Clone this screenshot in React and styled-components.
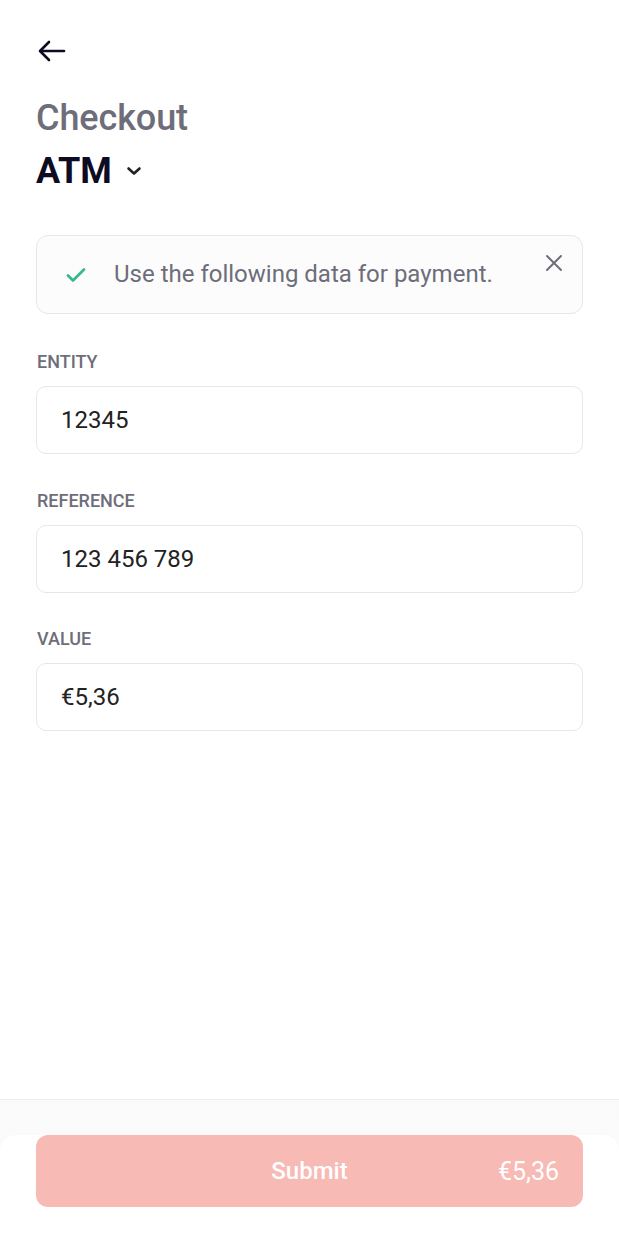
import React from "react";
import styled, { createGlobalStyle } from "styled-components";

const Global = createGlobalStyle`
  html, body { margin: 0; padding: 0; background: #ffffff; }
  body { font-family: Roboto, "Noto Sans", "Liberation Sans", sans-serif; -webkit-font-smoothing: antialiased; }
  * { box-sizing: border-box; }
`;

const Page = styled.div`
  min-height: 100vh;
  display: flex;
  flex-direction: column;
`;

const Content = styled.main`
  flex: 1;
  padding: 0 36px;
  display: flex;
  flex-direction: column;
`;

const TopBar = styled.div`
  height: 96px;
  display: flex;
  align-items: flex-start;
  padding-top: 36px;
  padding-left: 1px;
`;

const BackButton = styled.button`
  border: 0;
  background: none;
  padding: 0;
  width: 30px;
  height: 30px;
  display: flex;
  align-items: center;
  justify-content: center;
  color: #0d0c22;
`;

const Title = styled.h1`
  margin: 0;
  font-size: 36px;
  font-weight: 500;
  line-height: 44px;
  color: #6e6d7a;
  letter-spacing: -0.1px;
`;

const MethodRow = styled.div`
  display: flex;
  align-items: center;
  gap: 14px;
  margin-top: 9px;
`;

const Method = styled.span`
  font-size: 36px;
  font-weight: 700;
  line-height: 44px;
  color: #0d0c22;
`;

const Alert = styled.div`
  position: relative;
  margin-top: 42px;
  height: 79px;
  border: 1px solid #e7e7e9;
  border-radius: 12px;
  background: #fcfcfc;
  display: flex;
  align-items: center;
  padding-left: 28px;
  gap: 27px;
`;

const AlertText = styled.span`
  font-size: 24px;
  color: #6e6d7a;
  margin-top: -2px;
`;

const CloseButton = styled.button`
  position: absolute;
  top: 15px;
  right: 16px;
  border: 0;
  background: none;
  padding: 0;
  width: 24px;
  height: 24px;
  display: flex;
  align-items: center;
  justify-content: center;
  color: #6e6d7a;
`;

const Field = styled.div`
  margin-top: ${(p) => p.$top}px;
  display: flex;
  flex-direction: column;
`;

const Label = styled.label`
  font-size: 18px;
  font-weight: 500;
  color: #6e6d7a;
  line-height: 22px;
  text-transform: uppercase;
  margin-left: 1px;
`;

const Input = styled.div`
  margin-top: 13px;
  height: 68px;
  border: 1px solid #e7e7e9;
  border-radius: 10px;
  display: flex;
  align-items: center;
  padding-left: 24px;
  font-size: 24px;
  color: #222222;
`;

const Footer = styled.footer`
  border-top: 1px solid #ececec;
  background: linear-gradient(#fafafa, #fcfcfc);
  padding-top: 35px;
`;

const Sheet = styled.div`
  background: #ffffff;
  border-radius: 16px 16px 0 0;
  padding: 0 36px 37px;
`;

const SubmitButton = styled.button`
  position: relative;
  width: 100%;
  height: 72px;
  border: 0;
  border-radius: 12px;
  background: #f7bab5;
  color: #ffffff;
  font-family: inherit;
  font-size: 24px;
  font-weight: 500;
  display: flex;
  align-items: center;
  justify-content: center;
`;

const Price = styled.span`
  position: absolute;
  right: 24px;
  top: 50%;
  transform: translateY(-50%);
  font-size: 25px;
  font-weight: 400;
`;

const fields = [
  { label: "Entity", value: "12345", top: 37 },
  { label: "Reference", value: "123 456 789", top: 35.5 },
  { label: "Value", value: "€5,36", top: 35.5 },
];

export default function App() {
  return (
    <Page>
      <Global />
      <Content>
        <TopBar>
          <BackButton aria-label="Back">
            <svg width="28" height="22" viewBox="0 0 28 22" fill="none" stroke="currentColor" strokeWidth="2.6" strokeLinecap="round" strokeLinejoin="round">
              <path d="M26 11H2.5" />
              <path d="M11 2L2 11l9 9" />
            </svg>
          </BackButton>
        </TopBar>
        <Title>Checkout</Title>
        <MethodRow>
          <Method>ATM</Method>
          <svg width="16" height="12" viewBox="0 0 16 12" fill="none" stroke="#222" strokeWidth="2.6" strokeLinecap="round" strokeLinejoin="round">
            <path d="M2.5 3.5L8 8.5l5.5-5" />
          </svg>
        </MethodRow>
        <Alert>
          <svg width="22" height="18" viewBox="0 0 22 18" fill="none" stroke="#3bb88a" strokeWidth="2.8" strokeLinecap="round" strokeLinejoin="round">
            <path d="M3 9.5l5 5L19 3.5" />
          </svg>
          <AlertText>Use the following data for payment.</AlertText>
          <CloseButton aria-label="Close">
            <svg width="18" height="18" viewBox="0 0 18 18" fill="none" stroke="currentColor" strokeWidth="2" strokeLinecap="round">
              <path d="M2 2l14 14M16 2L2 16" />
            </svg>
          </CloseButton>
        </Alert>
        {fields.map((f) => (
          <Field key={f.label} $top={f.top}>
            <Label>{f.label}</Label>
            <Input>{f.value}</Input>
          </Field>
        ))}
      </Content>
      <Footer>
        <Sheet>
          <SubmitButton>
            Submit
            <Price>€5,36</Price>
          </SubmitButton>
        </Sheet>
      </Footer>
    </Page>
  );
}
